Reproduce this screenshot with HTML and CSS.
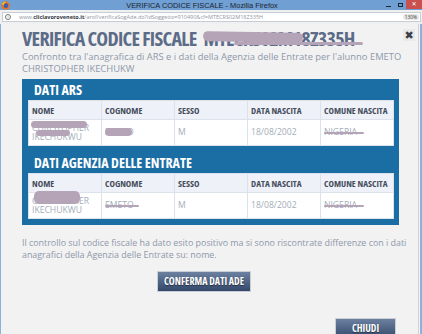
FILE: index.html
```html
<!DOCTYPE html>
<html lang="it">
<head>
    <meta charset="UTF-8">
    <title>VERIFICA CODICE FISCALE - Mozilla Firefox</title>
    <link rel="stylesheet" href="styles.css">
</head>
<body>

    <div class="titlebar">
        <svg class="ff-logo" width="9" height="9" viewBox="0 0 10 10">
            <circle cx="5" cy="5" r="4.6" fill="#e8741c"/>
            <circle cx="5.4" cy="5.2" r="2.6" fill="#3a5fb0"/>
            <path d="M1 3 Q3 0 6 1 Q3 2 3 5 Q2 4 1 3Z" fill="#f6c02b"/>
        </svg>
        <span class="win-title">VERIFICA CODICE FISCALE - Mozilla Firefox</span>
        <div class="win-ctrls">
            <span class="ctl-min"></span>
            <span class="ctl-max"></span>
            <span class="ctl-close">&#10005;</span>
        </div>
    </div>

    <div class="urlbar">
        <div class="url-field">
            <span class="url-info">i</span>
            <span class="url-text">www.<b>cliclavoroveneto.it</b>/arof/verificaSogAde.do?idSoggetto=910490&amp;cf=MTECRS02M18Z335H</span>
            <span class="zoom-pill">130%</span>
        </div>
    </div>

    <div class="viewport">
        <div class="dialog">
            <div class="dlg-head">
                <h1 class="dlg-title">VERIFICA CODICE FISCALE <span class="cf">MTECRS02M18Z335H<span class="smudge smudge-cf"></span><span class="smudge smudge-cf2"></span></span></h1>
                <span class="dlg-close">&#10006;</span>
            </div>
            <p class="intro">Confronto tra l'anagrafica di ARS e i dati della Agenzia delle Entrate per l'alunno EMETO<br>CHRISTOPHER IKECHUKW</p>

            <section class="panel">
                <h2 class="panel-title">DATI ARS</h2>
                <table class="data-table">
                    <tr>
                        <th>NOME</th><th>COGNOME</th><th>SESSO</th><th>DATA NASCITA</th><th>COMUNE NASCITA</th>
                    </tr>
                    <tr>
                        <td><span class="hidden-val">CHRISTOPHER IKECHUKWU<span class="smudge smudge-n1"></span><span class="smudge smudge-n2"></span></span></td>
                        <td><span class="hidden-val">EMETO<span class="smudge smudge-c1"></span></span></td>
                        <td>M</td>
                        <td>18/08/2002</td>
                        <td><span class="hidden-val">NIGERIA<span class="smudge smudge-line"></span></span></td>
                    </tr>
                </table>

                <h2 class="panel-title second">DATI AGENZIA DELLE ENTRATE</h2>
                <table class="data-table">
                    <tr>
                        <th>NOME</th><th>COGNOME</th><th>SESSO</th><th>DATA NASCITA</th><th>COMUNE NASCITA</th>
                    </tr>
                    <tr>
                        <td><span class="hidden-val">CHRISTOPHER IKECHUKWU<span class="smudge smudge-n3"></span></span></td>
                        <td><span class="hidden-val">EMETO<span class="smudge smudge-line"></span></span></td>
                        <td>M</td>
                        <td>18/08/2002</td>
                        <td><span class="hidden-val">NIGERIA<span class="smudge smudge-line"></span></span></td>
                    </tr>
                </table>
            </section>

            <p class="esito">Il controllo sul codice fiscale ha dato esito positivo ma si sono riscontrate differenze con i dati<br>anagrafici della Agenzia delle Entrate su: nome.</p>

            <div class="actions-mid">
                <button class="btn">CONFERMA DATI ADE</button>
            </div>
            <div class="actions-end">
                <button class="btn btn-close">CHIUDI</button>
            </div>
        </div>
        <div class="scroll-track"></div>
    </div>

</body>
</html>
```

FILE: styles.css
```css
body, body *, body *::before, body *::after {
    box-sizing: border-box;
    padding: 0;
    margin: 0;
}
:root {
    --win-blue: #6f9fd3;
    --frame-blue: #8cb1da;
    --page-bg: #f2f2f2;
    --title-color: #5c6c88;
    --text-soft: #8e98ab;
    --panel-blue: #1b6ea4;
    --cell-line: #dbe2eb;
}
body {
    width: 422px;
    height: 334px;
    overflow: hidden;
    background-color: var(--page-bg);
    font-family: "Open Sans", "DejaVu Sans", sans-serif;
}

/* finestra firefox */
.titlebar {
    height: 10px;
    background-color: var(--win-blue);
    display: flex;
    align-items: center;
}
.ff-logo {
    margin-left: 1px;
    display: block;
}
.win-title {
    flex: 1;
    text-align: center;
    font-family: "Liberation Sans", sans-serif;
    font-size: 7.4px;
    color: #1d2530;
    padding-left: 8px;
}
.win-ctrls {
    display: flex;
    align-items: flex-start;
    align-self: flex-start;
    height: 10px;
}
.ctl-min {
    width: 5px;
    height: 1px;
    background-color: #1d2530;
    margin: 6px 7px 0 0;
}
.ctl-max {
    width: 5px;
    height: 4px;
    border: 1px solid #1d2530;
    margin: 3px 3px 0 0;
}
.ctl-close {
    width: 16px;
    height: 9px;
    background-color: #c9504f;
    color: #fff;
    font-size: 6px;
    line-height: 9px;
    text-align: center;
}
.urlbar {
    height: 14px;
    background-color: #eef0f2;
    padding: 2px 1px 2px 2px;
}
.url-field {
    height: 10px;
    background-color: #fff;
    border: 1px solid #c9ccd1;
    display: flex;
    align-items: center;
    font-family: "Open Sans", sans-serif;
    font-size: 5.5px;
    color: #8f96a0;
}
.url-info {
    width: 6px;
    height: 6px;
    border: 1px solid #777;
    border-radius: 50%;
    font-size: 4px;
    line-height: 4px;
    text-align: center;
    color: #555;
    margin: 0 8px 0 2px;
}
.url-text {
    flex: 1;
    white-space: nowrap;
}
.url-text b {
    color: #30363e;
}
.zoom-pill {
    background-color: #e6e6e6;
    border-radius: 3px;
    padding: 0 2px;
    margin-right: 1px;
    font-size: 4.8px;
    color: #444;
}

.viewport {
    display: flex;
    height: 310px;
    border-left: 1px solid var(--frame-blue);
}
.scroll-track {
    width: 4px;
    border-left: 1px solid #d0d2d6;
    border-right: 2px solid var(--frame-blue);
    background-color: #f4f4f4;
}

/* dialog */
.dialog {
    flex: 1;
    min-width: 0;
    padding: 3px 19px 0 21px;
}
.dlg-head {
    display: flex;
    align-items: flex-start;
    justify-content: space-between;
    margin-right: -16px;
    height: 24px;
}
.dlg-title {
    font-family: "Open Sans", sans-serif;
    font-stretch: 75%;
    font-weight: 700;
    font-size: 20px;
    letter-spacing: -0.7px;
    line-height: 24px;
    color: var(--title-color);
    white-space: nowrap;
}
.cf {
    position: relative;
    margin-left: 4px;
}
.dlg-close {
    margin-top: 2px;
    width: 12px;
    height: 12px;
    background-color: #e9e9ea;
    color: #3a3f48;
    font-size: 11px;
    line-height: 12px;
    text-align: center;
    font-weight: 700;
}
.intro {
    font-size: 9.4px;
    line-height: 12px;
    color: var(--text-soft);
    white-space: nowrap;
}

.panel {
    margin-top: 4px;
    background-color: var(--panel-blue);
    padding: 0 5px 6px 6px;
}
.panel-title {
    font-family: "Open Sans", sans-serif;
    font-stretch: 75%;
    font-weight: 700;
    font-size: 14px;
    line-height: 21px;
    color: #fff;
    padding-left: 6px;
}
.panel-title.second {
    padding-top: 6px;
}
.data-table {
    width: 100%;
    border-collapse: collapse;
    table-layout: fixed;
    border: 1px solid #e6ebf1;
}
.data-table th {
    height: 19px;
    background-color: #eef2f8;
    border: 1px solid var(--cell-line);
    text-align: left;
    padding: 0 3px;
    font-stretch: 75%;
    font-weight: 700;
    font-size: 9.2px;
    color: #464d5c;
    white-space: nowrap;
}
.data-table td {
    height: 26px;
    background-color: #fff;
    border: 1px solid var(--cell-line);
    padding: 0 3px;
    font-size: 8.6px;
    line-height: 9px;
    color: #a4acb8;
}

/* dati oscurati */
.hidden-val {
    position: relative;
    display: inline-block;
}
.smudge {
    position: absolute;
    background-color: #b5a4b8;
    filter: blur(0.7px);
}
.smudge-cf {
    left: 0;
    width: 66%;
    top: 7px;
    height: 10px;
    border-radius: 5px;
    transform: rotate(1deg);
}
.smudge-cf2 {
    left: 20%;
    right: -8px;
    top: 17px;
    height: 3px;
    border-radius: 2px;
}
.smudge-n1 {
    left: -1px;
    top: -3px;
    width: 56px;
    height: 7px;
    border-radius: 4px;
}
.smudge-n2 {
    left: 4px;
    top: 6px;
    width: 34px;
    height: 6px;
    border-radius: 3px;
}
.smudge-n3 {
    left: 2px;
    top: -6px;
    width: 46px;
    height: 13px;
    border-radius: 5px;
}
.smudge-c1 {
    left: 0;
    top: 0;
    width: 27px;
    height: 8px;
    border-radius: 4px;
}
.smudge-line {
    left: 0;
    top: 4px;
    width: 120%;
    height: 2px;
    border-radius: 1px;
}

.esito {
    margin-top: 12px;
    font-size: 8.9px;
    line-height: 12px;
    color: var(--text-soft);
    white-space: nowrap;
}
.actions-mid {
    margin-top: 7px;
    padding-left: 135px;
}
.actions-end {
    margin-top: 26px;
    display: flex;
    justify-content: flex-end;
    padding-right: 3px;
}
.btn {
    height: 21px;
    padding: 0 6px;
    border: 1px solid #c9cdd4;
    background: linear-gradient(#6c80a0, #34486b);
    color: #fff;
    font-family: "Open Sans", sans-serif;
    font-stretch: 75%;
    font-weight: 700;
    font-size: 10px;
    text-shadow: 0 1px 1px rgba(0, 0, 0, 0.5);
}
.btn-close {
    width: 61px;
}
```
